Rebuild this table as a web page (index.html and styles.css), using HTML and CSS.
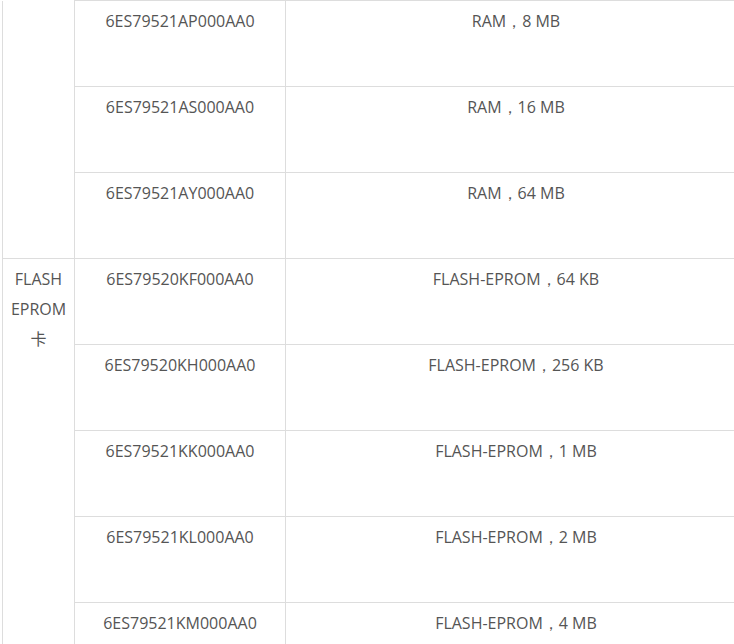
FILE: index.html
```html
<!DOCTYPE html>
<html>
<head>
<meta charset="utf-8">
<link rel="stylesheet" href="styles.css">
</head>
<body>
<table class="spec">
  <colgroup>
    <col class="c1"><col class="c2"><col class="c3">
  </colgroup>
  <tr>
    <td class="group cont" rowspan="3"></td>
    <td>6ES79521AP000AA0</td>
    <td>RAM<span class="fw">，</span>8 MB</td>
  </tr>
  <tr>
    <td>6ES79521AS000AA0</td>
    <td>RAM<span class="fw">，</span>16 MB</td>
  </tr>
  <tr>
    <td>6ES79521AY000AA0</td>
    <td>RAM<span class="fw">，</span>64 MB</td>
  </tr>
  <tr>
    <td class="group" rowspan="5">FLASH EPROM 卡</td>
    <td>6ES79520KF000AA0</td>
    <td>FLASH-EPROM<span class="fw">，</span>64 KB</td>
  </tr>
  <tr>
    <td>6ES79520KH000AA0</td>
    <td>FLASH-EPROM<span class="fw">，</span>256 KB</td>
  </tr>
  <tr>
    <td>6ES79521KK000AA0</td>
    <td>FLASH-EPROM<span class="fw">，</span>1 MB</td>
  </tr>
  <tr>
    <td>6ES79521KL000AA0</td>
    <td>FLASH-EPROM<span class="fw">，</span>2 MB</td>
  </tr>
  <tr>
    <td>6ES79521KM000AA0</td>
    <td>FLASH-EPROM<span class="fw">，</span>4 MB</td>
  </tr>
</table>
</body>
</html>
```
FILE: styles.css
```css
html, body {
  margin: 0;
  padding: 0;
  background: #fff;
}
body {
  overflow: hidden;
}
.spec {
  border-collapse: collapse;
  table-layout: fixed;
  width: 744px;
  margin-left: 2px;
  font-family: "Open Sans", "Noto Sans CJK SC", sans-serif;
  font-size: 16px;
  color: #555;
}
.c1 { width: 72px; }
.c2 { width: 211px; }
.c3 { width: 461px; }
.spec td {
  border: 1px solid #ddd;
  text-align: center;
  vertical-align: top;
  line-height: 30px;
  padding: 5px 6px 0;
  height: 80px;
  box-sizing: content-box;
}
.spec td.cont {
  border-top: none;
}
.fw {
  font-family: "DejaVu Sans";
  line-height: 0;
}
```
